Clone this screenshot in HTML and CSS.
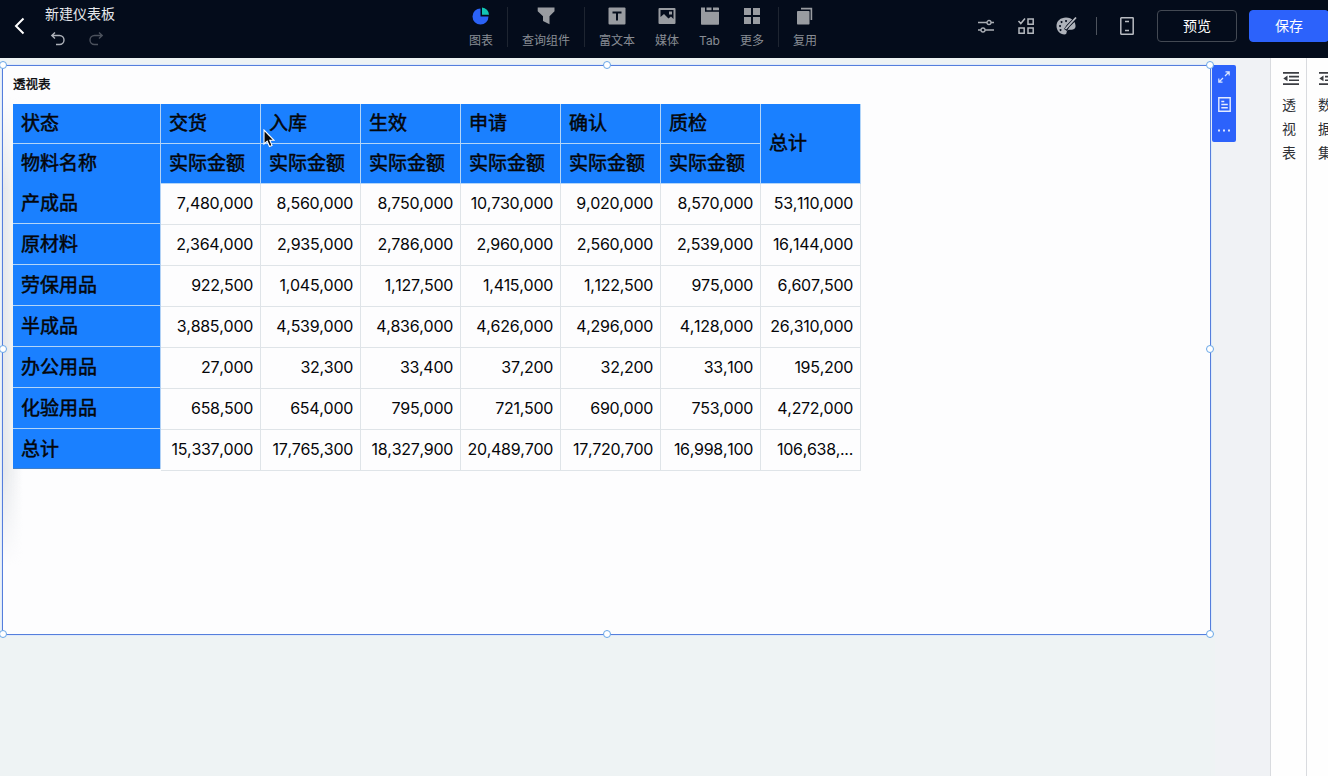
FILE: index.html
```html
<!DOCTYPE html>
<html lang="zh-CN">
<head>
<meta charset="utf-8">
<title>新建仪表板</title>
<link rel="stylesheet" href="styles.css">
</head>
<body>
<header class="topbar">
  <div class="topbar-left">
    <svg class="back" width="12" height="18" viewBox="0 0 12 18"><path d="M9.500 1.500 2 9l7.500 7.500" fill="none" stroke="#fff" stroke-width="2"/></svg>
    <div class="doc">
      <div class="doc-title">新建仪表板</div>
      <div class="history">
        <svg width="16" height="16" viewBox="0 0 16 16"><path d="M5 1.500 1.800 4.500 5 7.500M2 4.500h7.500a4.500 4.500 0 0 1 0 9H6" fill="none" stroke="#aeb2ba" stroke-width="1.400"/></svg>
        <svg width="16" height="16" viewBox="0 0 16 16"><path d="m11 1.500 3.200 3L11 7.500M14 4.500H6.500a4.500 4.500 0 0 0 0 9H10" fill="none" stroke="#4c525d" stroke-width="1.400"/></svg>
      </div>
    </div>
  </div>
  <nav class="tools">
    <div class="tool w-chart"><svg width="18" height="18" viewBox="0 0 18 18"><path d="M8.500 1.500A8 8 0 1 0 16.500 9.500h-8z" fill="#2b62f6"/><path d="M10 .5a7.500 7.500 0 0 1 7 7.200h-7z" fill="#12c6b4"/></svg><span>图表</span></div>
    <i class="sep"></i>
    <div class="tool w-query"><svg width="18" height="18" viewBox="0 0 18 18"><path d="M.7.5h16.800v3.700l-5 5v8L6 14V9.200l-5.300-5z" fill="#999ca1"/></svg><span>查询组件</span></div>
    <i class="sep"></i>
    <div class="tool w-rich"><svg width="18" height="18" viewBox="0 0 18 18"><rect x=".5" y=".5" width="17" height="17" rx="1" fill="#999ca1"/><path d="M4.500 5.500h9M9 5.500v8" fill="none" stroke="#050d1c" stroke-width="2"/></svg><span>富文本</span></div>
    <div class="tool w-media"><svg width="18" height="18" viewBox="0 0 18 18"><path fill-rule="evenodd" d="M1.500 1h15q1 0 1 1v14q0 1-1 1h-15q-1 0-1-1V2q0-1 1-1zM2.500 3v7L6 7l4.500 4.500L13 9.500l2.500 2.500V3zM11 4.500h3v3h-3z" fill="#999ca1"/></svg><span>媒体</span></div>
    <div class="tool w-tab"><svg width="18" height="18" viewBox="0 0 18 18"><path d="M0 .5h4v4.300h14v12.200q0 .7-.7.7H.7q-.7 0-.7-.7zM5.500.5h5v2.700h-5zM12 .5h5.300q.7 0 .7.7v2h-6z" fill="#999ca1"/></svg><span>Tab</span></div>
    <div class="tool w-more"><svg width="18" height="18" viewBox="0 0 18 18"><path d="M1 1h7v7H1zM10 1h7v7h-7zM1 10h7v7H1zM10 10h7v7h-7z" fill="#999ca1"/></svg><span>更多</span></div>
    <i class="sep"></i>
    <div class="tool w-reuse"><svg width="18" height="18" viewBox="0 0 18 18"><rect x="1" y="4" width="12.500" height="13.500" rx=".7" fill="#999ca1"/><path d="M5 1.600h10.400V13" fill="none" stroke="#999ca1" stroke-width="1.600"/></svg><span>复用</span></div>
  </nav>
  <div class="actions">
    <svg width="16" height="14" viewBox="0 0 16 14" fill="none" stroke="#aaaeb5" stroke-width="1.300"><path d="M0 3.500h9M13 3.500h3M0 11h3M7 11h9"/><circle cx="11" cy="3.500" r="2"/><circle cx="5" cy="11" r="2"/></svg>
    <svg width="18" height="18" viewBox="0 0 18 18" fill="none" stroke="#b4b8be" stroke-width="1.500"><path d="m1.500 4 2.300 2.500L8 1.500M11 2h5.200v5.200H11zM2 11h5.200v5.200H2zM11 11h5.200v5.200H11z"/></svg>
    <svg class="palette" width="21" height="20" viewBox="0 0 21 20"><path d="M10 1.500C4.500 1.500.5 5 .5 10c0 4.500 3.500 8.500 8 8.500 3 0 1.500-3 3-4.200 1.500-1.300 7 .7 8-3.300.7-5-3.500-9.500-9.500-9.500z" fill="#aeb2ba"/><path d="M4 9a1 1 0 1 0 .1 0M5.500 5a1 1 0 1 0 .1 0M10 4a1 1 0 1 0 .1 0M4.500 13a1 1 0 1 0 .1 0" fill="#050d1c"/><path d="M20.500 1.500 12 10l-2.500 4" stroke="#050d1c" stroke-width="3.400" fill="none"/><path d="m20 1.500-7.700 8.300L9.500 13" stroke="#b8bbc2" stroke-width="1.800" fill="none"/></svg>
    <i class="action-sep"></i>
    <svg class="phone" width="14" height="18" viewBox="0 0 14 18" fill="none" stroke="#b8bbc1" stroke-width="1.500"><rect x=".8" y=".8" width="12.400" height="16.400" rx=".5"/><path d="M5 4.500h4M5 13.500h4"/></svg>
    <button class="btn preview">预览</button>
    <button class="btn save">保存</button>
  </div>
</header>
<main class="workspace">
  <section class="canvas">
    <article class="widget">
      <h2 class="widget-title">透视表</h2>
      <div class="pivot">
        <div class="row-heads">
          <div class="head line">状态</div>
          <div class="head">物料名称</div>
          <div class="head line">产成品</div>
          <div class="head line tall">原材料</div>
          <div class="head line tall">劳保用品</div>
          <div class="head line tall">半成品</div>
          <div class="head line tall">办公用品</div>
          <div class="head line tall">化验用品</div>
          <div class="head tall last">总计</div>
        </div>
        <table class="values">
          <thead>
            <tr><th>交货</th><th>入库</th><th>生效</th><th>申请</th><th>确认</th><th>质检</th><th class="total" rowspan="2">总计</th></tr>
            <tr><th>实际金额</th><th>实际金额</th><th>实际金额</th><th>实际金额</th><th>实际金额</th><th>实际金额</th></tr>
          </thead>
          <tbody>
            <tr><td>7,480,000</td><td>8,560,000</td><td>8,750,000</td><td>10,730,000</td><td>9,020,000</td><td>8,570,000</td><td>53,110,000</td></tr>
            <tr><td>2,364,000</td><td>2,935,000</td><td>2,786,000</td><td>2,960,000</td><td>2,560,000</td><td>2,539,000</td><td>16,144,000</td></tr>
            <tr><td>922,500</td><td>1,045,000</td><td>1,127,500</td><td>1,415,000</td><td>1,122,500</td><td>975,000</td><td>6,607,500</td></tr>
            <tr><td>3,885,000</td><td>4,539,000</td><td>4,836,000</td><td>4,626,000</td><td>4,296,000</td><td>4,128,000</td><td>26,310,000</td></tr>
            <tr><td>27,000</td><td>32,300</td><td>33,400</td><td>37,200</td><td>32,200</td><td>33,100</td><td>195,200</td></tr>
            <tr><td>658,500</td><td>654,000</td><td>795,000</td><td>721,500</td><td>690,000</td><td>753,000</td><td>4,272,000</td></tr>
            <tr><td>15,337,000</td><td>17,765,300</td><td>18,327,900</td><td>20,489,700</td><td>17,720,700</td><td>16,998,100</td><td>106,638,...</td></tr>
          </tbody>
        </table>
      </div>
      <i class="handle nw"></i><i class="handle n"></i><i class="handle ne"></i>
      <i class="handle w"></i><i class="handle e"></i>
      <i class="handle sw"></i><i class="handle s"></i><i class="handle se"></i>
    </article>
    <div class="widget-tools">
      <svg width="12" height="12" viewBox="0 0 12 12" fill="none" stroke="#dce6ff" stroke-width="1.200"><path d="M7.500.8h3.700v3.700M11 1 7 5M.8 7.500v3.700h3.700M1 11l4-4"/></svg>
      <svg class="note" width="13" height="15" viewBox="0 0 13 15" fill="none" stroke="#e4ebff" stroke-width="1.400"><path d="M.8.8h11.400v13.400H.8zM3.300 4.500h3M3.300 7.500h6.500M3.300 10.700h6.500"/></svg>
      <svg width="12" height="3" viewBox="0 0 12 3" fill="#dce6ff"><path d="M0 .5h2v2H0zM5 .5h2v2H5zM10 .5h2v2h-2z"/></svg>
    </div>
    <svg class="cursor" width="12" height="19" viewBox="0 0 12 19"><path d="M1 1v14l3.200-2.800L6.500 17.500 9 16.400 6.800 11.300H11z" fill="#080808" stroke="#fff" stroke-width="1.100"/></svg>
  </section>
  <aside class="rail">
    <svg width="16" height="13" viewBox="0 0 16 13"><path d="M0 0h16v1.800H0zM6 3.800h10v1.600H6zM6 7.500h10v1.600H6zM0 11.200h16V13H0zM4.500 3.600v5.700L.3 6.500z" fill="#3b3d42"/></svg>
    <div class="rail-label">透视表</div>
  </aside>
  <aside class="rail">
    <svg width="16" height="13" viewBox="0 0 16 13"><path d="M0 0h16v1.800H0zM6 3.800h10v1.600H6zM6 7.500h10v1.600H6zM0 11.200h16V13H0zM4.500 3.600v5.700L.3 6.500z" fill="#3b3d42"/></svg>
    <div class="rail-label">数据集</div>
  </aside>
</main>
</body>
</html>
```
FILE: styles.css
```css
* { box-sizing: border-box; }
body {
  margin: 0;
  width: 1328px;
  height: 776px;
  overflow: hidden;
  display: flex;
  flex-direction: column;
  background: #eff3f5;
  color: #050609;
  font-family: Inter, "Noto Sans CJK SC", sans-serif;
}
svg { display: block; flex: none; }

/* Top bar */
.topbar {
  flex: none;
  height: 58px;
  display: flex;
  background: #040c1b;
}
.topbar-left { width: 460px; display: flex; padding-left: 14px; }
.back { margin-top: 17px; }
.doc { margin-left: 19px; padding-top: 3px; }
.doc-title { font-size: 14px; line-height: 21px; color: #e6e8ec; }
.history { display: flex; gap: 22px; padding: 7px 0 0 5px; }
.tools { display: flex; width: 370px; padding-top: 7px; }
.tool {
  flex: none;
  display: flex;
  flex-direction: column;
  align-items: center;
  gap: 7px;
  color: #888c94;
  font-size: 12px;
  line-height: 17px;
  white-space: nowrap;
}
.w-chart { width: 42px; }
.w-query { width: 76px; }
.w-rich { width: 64px; }
.w-media { width: 36px; }
.w-tab { width: 49px; }
.w-more { width: 36px; }
.w-more + .sep { margin-left: 8px; }
.w-reuse { width: 52px; }
.sep { flex: none; width: 1px; height: 40px; background: #1e2531; }
.w-chart + .sep { margin-left: 5px; }
.actions { flex: none; width: 498px; display: flex; align-items: center; padding: 0 0 6px 148px; }
.actions svg + svg { margin-left: 23px; }
.actions svg + .palette { margin-left: 21px; }
.action-sep { flex: none; width: 1px; height: 18px; margin: 0 23px 0 19px; background: #4d535d; }
.btn {
  flex: none;
  width: 80px;
  height: 32px;
  padding: 0;
  border: 1px solid #434953;
  border-radius: 4px;
  background: transparent;
  color: #fff;
  font: 14px/30px Inter, "Noto Sans CJK SC", sans-serif;
}
.preview { margin-left: 23px; }
.save { margin-left: 12px; border-color: #2c62fb; background: #2c62fb; }

/* Workspace */
.workspace { flex: 1; display: flex; }
.canvas {
  position: relative;
  flex: none;
  width: 1270px;
  display: flex;
  align-items: flex-start;
  padding: 7px 0 0 2px;
  background: linear-gradient(90deg, #eef3f4 0 1215px, #f0f2f5 1215px);
}
.widget {
  position: relative;
  width: 1209px;
  height: 570px;
  padding: 9px 0 0 10px;
  border: 1px solid #557edc;
  background: #fdfdfe;
  box-shadow: 0 0 0 1px #dfeafa;
}
.widget::before {
  content: "";
  position: absolute;
  left: 0;
  top: 30px;
  width: 20px;
  height: 470px;
  background: linear-gradient(90deg, rgba(214,218,222,.6), transparent);
  -webkit-mask-image: linear-gradient(transparent, #000 20%, #000 80%, transparent);
  mask-image: linear-gradient(transparent, #000 20%, #000 80%, transparent);
}
.widget-title { margin: 0; height: 29px; font-size: 12.5px; line-height: 20px; font-weight: 400; -webkit-text-stroke: .4px; }
.pivot { position: relative; display: flex; width: 848px; }
.row-heads {
  align-self: flex-start;
  width: 148px;
  border-right: 1px solid #b3d2f5;
  background: #1a80ff;
}
.head {
  height: 40px;
  padding-left: 8px;
  font-size: 19px;
  line-height: 40px;
  font-weight: 400;
  -webkit-text-stroke: .5px;
}
.head.line { border-bottom: 1px solid #b3d5f8; }
.head.tall { height: 41px; line-height: 42px; }
.head.last { height: 40px; border-bottom: 1px solid #4180ca; }
.values { width: 700px; table-layout: fixed; border-spacing: 0; }
.values th, .values td { padding: 0 7px 0 8px; border: solid #dfe4e8; border-width: 0 1px 1px 0; }
.values th {
  height: 40px;
  border-color: #b3d5f8;
  background: #1a80ff;
  font-size: 19px;
  font-weight: 400;
  -webkit-text-stroke: .5px;
  line-height: 38px;
  text-align: left;
  white-space: nowrap;
}
.values td {
  height: 41px;
  padding: 0 7px 2px 0;
  font-size: 16px;
  line-height: 38px;
  font-kerning: none;
  font-feature-settings: "calt" 0;
  letter-spacing: -.3px;
  text-align: right;
}
.handle {
  position: absolute;
  width: 8px;
  height: 8px;
  border: 1px solid #68a6e8;
  border-radius: 50%;
  background: #fff;
}
.nw, .n, .ne { top: -5px; }
.w, .e { top: 279px; }
.sw, .s, .se { bottom: -4px; }
.nw, .w, .sw { left: -4px; }
.n, .s { left: 600px; }
.ne, .e, .se { right: -4px; }
.widget-tools {
  width: 24px;
  height: 77px;
  margin-left: 1px;
  padding: 6px 0 10px;
  display: flex;
  flex-direction: column;
  align-items: center;
  justify-content: space-between;
  border-radius: 2px;
  background: #2c62fb;
}
.note { margin-bottom: 3px; }
.cursor { position: absolute; left: 263px; top: 71px; }
.rail {
  flex: none;
  width: 36px;
  padding: 14px 0 0 12px;
  border-left: 1px solid #d9dbdf;
  background: #fefefe;
}
.rail-label {
  width: 14px;
  margin: 8px 0 0 -1px;
  color: #2f3136;
  font-size: 14px;
  line-height: 24px;
  word-break: break-all;
}
```
